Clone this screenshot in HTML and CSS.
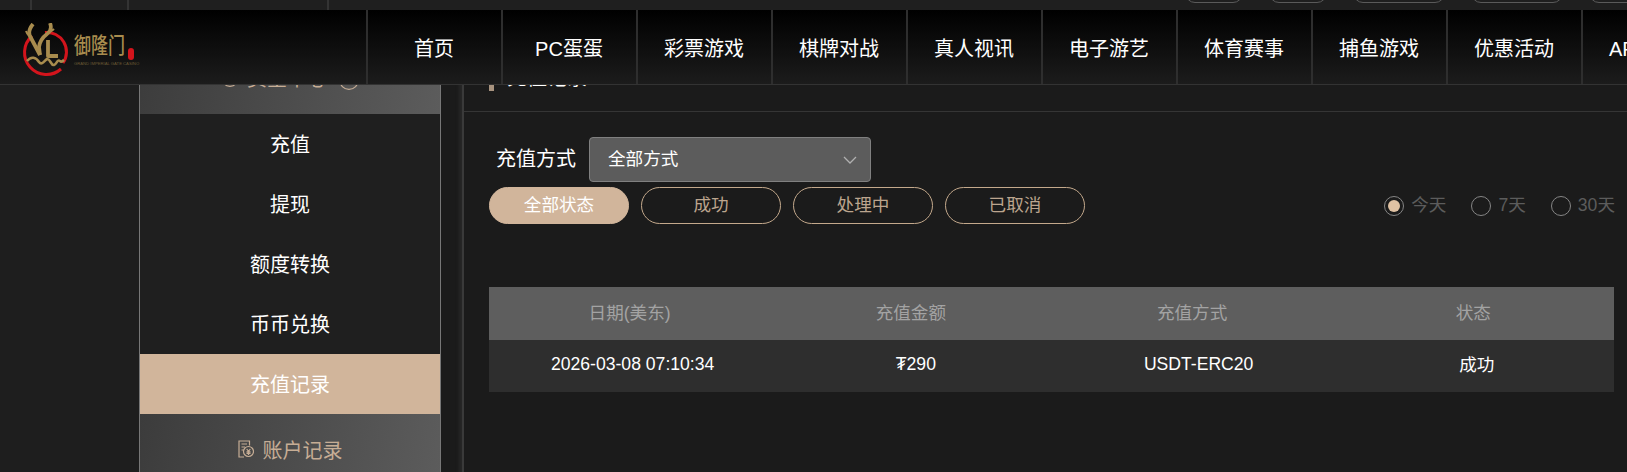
FILE: index.html
```html
<!DOCTYPE html>
<html lang="zh-CN">
<head>
<meta charset="utf-8">
<title>充值记录</title>
<link rel="stylesheet" href="styles.css">
</head>
<body>
<div class="topbar">
  <span class="tcell tcell-a"></span><span class="tcell tcell-b"></span><span class="tcell tcell-c"></span>
  <div class="tpills">
    <span class="tpill tpill-s"></span><span class="tpill tpill-s"></span><span class="tpill tpill-m"></span><span class="tpill tpill-m"></span><span class="tpill tpill-m"></span>
  </div>
</div>
<header class="header">
  <a class="logo">
    <svg class="logo-mark" viewBox="0 0 50 56" width="50" height="56" aria-hidden="true">
      <path class="ring" d="M12 13 A19.5 19.5 0 1 0 41 46" />
      <path class="ring" d="M25 9.5 A19.5 19.5 0 0 1 43 40" />
      <path class="gold" d="M13 1 C9 6 8 11 11 15 L20 32" />
      <path class="gold" d="M30 0 C32 5 30 9 27 11 C23 14 20 17 19 24 L20 32" />
      <path class="gold-fine" d="M6 8 C7 11 9 13 12 14 M34 6 C32 8 30 9 27 10" />
      <path class="gold" d="M28 17 L28 33 L38 33" />
      <path class="gold-thin" d="M7 38 C11 33 16 34 19 39 C22 43 25 37 27 36 C30 35 31 43 34 42 C37 41 37 36 40 38 C41 39 42 39 44 37" />
    </svg>
    <span class="logo-text">
      <span class="logo-cn">御隆门</span>
      <span class="logo-seal"></span>
      <span class="logo-en">GRAND IMPERIAL GATE CASINO</span>
    </span>
  </a>
  <nav class="nav">
    <a class="nav-item">首页</a>
    <a class="nav-item">PC蛋蛋</a>
    <a class="nav-item">彩票游戏</a>
    <a class="nav-item">棋牌对战</a>
    <a class="nav-item">真人视讯</a>
    <a class="nav-item">电子游艺</a>
    <a class="nav-item">体育赛事</a>
    <a class="nav-item">捕鱼游戏</a>
    <a class="nav-item">优惠活动</a>
    <a class="nav-item">APP下载</a>
  </nav>
</header>
<main class="main">
  <aside class="sidebar">
    <div class="side-head side-head-top">
      <svg class="side-ico" viewBox="0 0 18 18" width="18" height="18" aria-hidden="true"><circle cx="9" cy="9" r="8.4" /></svg>
      <span>资金中心</span>
      <svg class="side-ring" viewBox="0 0 20 20" width="20" height="20" aria-hidden="true"><circle cx="10" cy="10" r="9.4" /></svg>
    </div>
    <a class="side-item">充值</a>
    <a class="side-item">提现</a>
    <a class="side-item">额度转换</a>
    <a class="side-item">币币兑换</a>
    <a class="side-item side-item-active">充值记录</a>
    <div class="side-head side-head-low">
      <svg class="side-doc" viewBox="0 0 16 18" width="16" height="18" aria-hidden="true">
        <path d="M11.5 5.5 V1 H1 V17 H6" />
        <path d="M3.5 4 H9 M3.5 7 H7 M3.5 10 H5.5" />
        <circle cx="10.5" cy="11.5" r="5" />
        <path d="M8.7 9 L10.5 11.3 L12.3 9 M8.5 11.8 H12.5 M8.5 13.4 H12.5 M10.5 11.3 V15" />
      </svg>
      <span>账户记录</span>
    </div>
  </aside>
  <section class="content">
    <div class="title-bar"><span class="title-mark"></span><h2 class="title">充值记录</h2></div>
    <div class="method-row">
      <label class="method-label">充值方式</label>
      <div class="select">
        <span class="select-text">全部方式</span>
        <svg class="chev" viewBox="0 0 14 8" width="14" height="8" aria-hidden="true"><path d="M1 1 L7 7 L13 1" /></svg>
      </div>
    </div>
    <div class="status-row">
      <div class="pills">
        <a class="pill pill-active">全部状态</a>
        <a class="pill">成功</a>
        <a class="pill">处理中</a>
        <a class="pill">已取消</a>
      </div>
      <div class="radios">
        <span class="radio"><i class="radio-dot radio-on"></i><span class="radio-text">今天</span></span>
        <span class="radio"><i class="radio-dot"></i><span class="radio-text">7天</span></span>
        <span class="radio"><i class="radio-dot"></i><span class="radio-text">30天</span></span>
      </div>
    </div>
    <table class="records">
      <thead>
        <tr><th>日期(美东)</th><th>充值金额</th><th>充值方式</th><th>状态</th></tr>
      </thead>
      <tbody>
        <tr><td>2026-03-08 07:10:34</td><td>₮290</td><td>USDT-ERC20</td><td>成功</td></tr>
      </tbody>
    </table>
  </section>
</main>
</body>
</html>
```
FILE: styles.css
```css
* { box-sizing: border-box; }
html, body { margin: 0; height: 472px; overflow: hidden; }
body {
  background: #1e1e1e;
  color: #fff;
  font-family: "Liberation Sans", "Noto Sans CJK SC", sans-serif;
}
a { color: inherit; text-decoration: none; }

.topbar { display: flex; height: 10px; background: #1f1f1f; overflow: hidden; }
.tcell { display: block; height: 10px; border-right: 2px solid #333; }
.tcell-a { width: 32px; }
.tcell-b { width: 97px; }
.tcell-c { width: 200px; }
.tpills { display: flex; gap: 26px; margin-left: auto; width: 442px; height: 3px; overflow: hidden; align-items: flex-end; flex-shrink: 0; }
.tpill { display: block; flex-shrink: 0; height: 30px; border: 1px solid #5a5a5a; border-radius: 10px; }
.tpill-s { width: 58px; }
.tpill-m { width: 92px; }

.header {
  position: relative;
  z-index: 2;
  display: flex;
  height: 75px;
  background: linear-gradient(#000, #1c1c1c);
  border-bottom: 1px solid #333;
  overflow: hidden;
}
.logo { display: flex; width: 366px; flex-shrink: 0; padding: 13px 0 0 20px; }
.logo-mark { flex-shrink: 0; display: block; }
.ring { fill: none; stroke: #d3141c; stroke-width: 3; }
.gold { fill: none; stroke: #a88c4e; stroke-width: 3.8; stroke-linejoin: round; }
.gold-fine { fill: none; stroke: #a88c4e; stroke-width: 2; }
.gold-thin { fill: none; stroke: #a88c4e; stroke-width: 2.6; }
.logo-text { position: relative; display: block; width: 64px; margin-left: 4px; }
.logo-cn {
  position: absolute;
  left: 0;
  top: 11px;
  font-size: 17px;
  line-height: 26px;
  font-weight: 500;
  color: #a88c4e;
  white-space: nowrap;
  transform: scaleY(1.25);
}
.logo-seal { position: absolute; left: 54px; top: 25px; width: 6px; height: 12px; background: #d3141c; border-radius: 3px; }
.logo-en { position: absolute; left: 0; top: 38px; font-size: 4.2px; line-height: 5px; color: #6b5a35; white-space: nowrap; }

.nav { display: flex; }
.nav-item {
  flex: 0 0 135px;
  display: flex;
  align-items: center;
  justify-content: center;
  padding-right: 1px;
  border-left: 2px solid #2e2e2e;
  font-size: 20px;
  white-space: nowrap;
}

.main { display: flex; margin-top: -41px; padding-left: 139px; background: linear-gradient(90deg, #1e1e1e 139px, #1b1b1b 139px); }
.sidebar {
  flex: 0 0 302px;
  height: 440px;
  border-left: 1px solid #777;
  border-right: 1px solid #777;
  background: #1f1f1f;
}
.side-head {
  display: flex;
  align-items: center;
  justify-content: center;
  height: 70px;
  font-size: 20px;
  color: #c6ad95;
  background: linear-gradient(100deg, #3c3c3c, #5c5c5c);
}
.side-head-top { gap: 8px; }
.side-head-top span { line-height: 20px; margin-right: 4px; }
.side-head-low { gap: 9px; }
.side-ico { margin-top: -2px; }
.side-ring { margin-top: 2px; }
.side-ico circle, .side-ring circle { fill: none; stroke: #c6ad95; stroke-width: 1.2; }
.side-doc { flex-shrink: 0; }
.side-doc path, .side-doc circle { fill: none; stroke: #c6ad95; stroke-width: 1.2; }
.side-item {
  display: flex;
  align-items: center;
  justify-content: center;
  height: 60px;
  padding-bottom: 2px;
  font-size: 20px;
}
.side-item-active { background: #d1b59b; }

.content {
  flex: 1;
  min-width: 0;
  margin-left: 21px;
  height: 440px;
  border-left: 2px solid #3a3a3a;
  box-shadow: -3px 0 3px rgba(60, 60, 60, .35);
}
.title-bar {
  display: flex;
  align-items: center;
  gap: 13px;
  height: 68px;
  padding-left: 25px;
  border-bottom: 1px solid #353535;
}
.title-mark { display: block; width: 5px; height: 26px; background: #a8937f; }
.title { margin: 0; font-size: 20px; font-weight: 400; line-height: 24px; }

.method-row { display: flex; align-items: center; gap: 13px; margin: 25px 0 0 32px; height: 45px; }
.method-label { padding-bottom: 5px; font-size: 20px; }
.select {
  display: flex;
  align-items: center;
  justify-content: space-between;
  width: 282px;
  height: 45px;
  padding: 0 13px 0 18px;
  background: #5c5c5c;
  border: 1px solid #808080;
  border-radius: 4px;
  font-size: 17.6px;
}
.select-text { padding-bottom: 4px; }
.chev path { fill: none; stroke: #b0b0b0; stroke-width: 1.3; }

.status-row { display: flex; justify-content: space-between; align-items: center; margin: 5px 12px 0 25px; height: 37px; }
.pills { display: flex; gap: 12px; }
.pill {
  display: flex;
  align-items: center;
  justify-content: center;
  width: 140px;
  height: 37px;
  padding-bottom: 4px;
  border: 1px solid #c4a98c;
  border-radius: 19px;
  font-size: 17.6px;
  color: #bca58e;
}
.pill-active { background: #d1b59b; border-color: #d1b59b; color: #fff; }
.radios { display: flex; gap: 25px; }
.radio { display: flex; align-items: center; gap: 7px; font-size: 17.6px; color: #5c5c5c; }
.radio-text { padding-bottom: 4px; }
.radio-dot { display: flex; align-items: center; justify-content: center; width: 20px; height: 20px; border: 1px solid #858585; border-radius: 50%; }
.radio-on::after { content: ""; width: 12px; height: 12px; border-radius: 50%; background: #e0c2a3; }

.records {
  width: 1125px;
  margin: 63px 0 0 25px;
  border-collapse: collapse;
  table-layout: fixed;
  font-size: 17.6px;
}
.records th { height: 53px; padding: 0 0 4px; font-weight: 400; color: #a3a3a3; background: #5e5e5e; }
.records td { height: 52px; padding: 0 0 3px; text-align: center; background: #2e2e2e; }
.records td:nth-child(1) { padding-left: 6px; }
.records td:nth-child(2) { padding-left: 10px; }
.records td:nth-child(3) { padding-left: 13px; }
.records td:nth-child(4) { padding-left: 7px; padding-bottom: 6px; }
```
